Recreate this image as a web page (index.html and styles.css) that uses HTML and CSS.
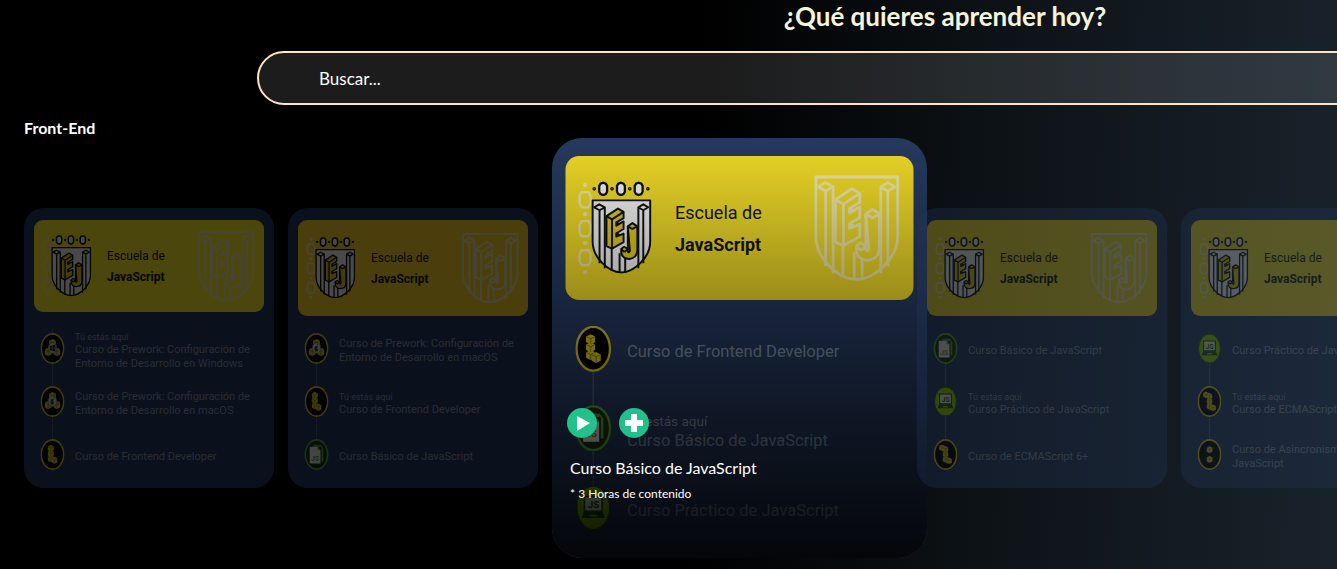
FILE: index.html
```html
<!DOCTYPE html>
<html lang="es">
<head>
<meta charset="utf-8">
<meta name="viewport" content="width=device-width, initial-scale=1">
<title>¿Qué quieres aprender hoy?</title>
<link rel="stylesheet" href="styles.css">
</head>
<body>
<svg class="sprite" aria-hidden="true">
  <symbol id="shield" viewBox="60 84 186 228">
    <path class="shield-base" d="M66 89H241V215C241 262 192 308 153 308S66 262 66 215Z"/>
    <path class="shield-line" d="M71 110l15-9 17 9-16 9zM87 119V280M103 110V295M124 236V303M148 250V308M165 262V308M205 110l15-9 15 9-15 9zM205 110V295M220 119V280"/>
    <path class="shield-block" d="M108 137L143 114 160 124V143L138 156V166L160 153V176L138 189V199L160 190V216L125 236 108 228Z"/>
    <path class="shield-line" d="M108 137L125 147V234M125 147L160 124M138 156L148 161M138 189L148 194"/>
    <path class="shield-block" d="M173 168L187 158 202 168V240C202 276 153 274 153 246V236L162 230 172 236C172 250 179 250 179 240Z"/>
    <path class="shield-line" d="M173 168L187 176 202 168M173 168V240M163 246L153 238M163 246L172 238"/>
  </symbol>
  <symbol id="emblem" viewBox="20 28 228 290">
    <g class="side-hex">
      <path d="M33 64H53L60 76V98L53 110H33L26 98V76ZM33 152H53L60 164V186L53 198H33L26 186V164ZM33 240H53L60 252V274L53 286H33L26 274V252Z"/>
      <circle cx="43" cy="42" r="3"/><circle cx="43" cy="131" r="3"/><circle cx="43" cy="219" r="3"/><circle cx="43" cy="307" r="3"/>
    </g>
    <g class="top-hex">
      <path d="M90 38L98 35 106 38 110 45V63L106 70 98 73 90 70 86 63V45ZM144 38L152 35 160 38 164 45V63L160 70 152 73 144 70 140 63V45ZM198 38L206 35 214 38 218 45V63L214 70 206 73 198 70 194 63V45Z"/>
      <circle cx="71" cy="54" r="2"/><circle cx="125" cy="54" r="2"/><circle cx="179" cy="54" r="2"/><circle cx="234" cy="54" r="2"/>
    </g>
    <use href="#shield" x="60" y="84" width="186" height="228"/>
  </symbol>
  <symbol id="cube" viewBox="0 0 32 38" preserveAspectRatio="none">
    <path fill="#d8c31c" d="M16 1L31 9V28L16 37 1 28V9Z"/>
    <path fill="none" stroke="#4a420a" stroke-width="2" d="M2 10L16 17 30 10M16 17V36"/>
  </symbol>
  <symbol id="ring" viewBox="0 0 110 142">
    <ellipse cx="55" cy="71" rx="51" ry="67" fill="#000" stroke="#dcc41a" stroke-width="7"/>
  </symbol>
  <symbol id="i-frontend" viewBox="0 0 110 142">
    <use href="#ring"/>
    <use href="#cube" x="32" y="74" width="30" height="33"/>
    <use href="#cube" x="32" y="50" width="30" height="33"/>
    <use href="#cube" x="32" y="26" width="30" height="33"/>
    <use href="#cube" x="49" y="80" width="30" height="36"/>
  </symbol>
  <symbol id="i-prework" viewBox="0 0 110 142">
    <use href="#ring"/>
    <use href="#cube" x="38" y="26" width="34" height="42"/>
    <use href="#cube" x="18" y="66" width="34" height="42"/>
    <use href="#cube" x="58" y="66" width="34" height="42"/>
    <ellipse cx="55" cy="69" rx="20" ry="25" fill="#c9c9c9" stroke="#555" stroke-width="3"/>
  </symbol>
  <symbol id="i-windows" viewBox="0 0 110 142">
    <use href="#i-prework"/>
    <path fill="#222" d="M43 59l11-3v12H43zM56 56l12-3v15H56zM43 70h11v12l-11-3zM56 70h12v15l-12-3z"/>
  </symbol>
  <symbol id="i-mac" viewBox="0 0 110 142">
    <use href="#i-prework"/>
    <path fill="#444" d="M58 56c0-5 3-7 5-7 0 4-2 7-5 7zM62 62c-5 4-5 11 1 15-2 8-6 11-9 8-10 2-11-24-1-26 4 2 7-1 9 3z"/>
  </symbol>
  <symbol id="i-ecma" viewBox="0 0 110 142">
    <use href="#ring"/>
    <use href="#cube" x="25" y="24" width="28" height="33"/>
    <use href="#cube" x="41" y="77" width="28" height="33"/>
    <use href="#cube" x="41" y="54" width="28" height="33"/>
    <use href="#cube" x="41" y="31" width="28" height="33"/>
    <use href="#cube" x="57" y="84" width="28" height="33"/>
  </symbol>
  <symbol id="i-async" viewBox="0 0 110 142">
    <use href="#ring"/>
    <use href="#cube" x="41" y="32" width="29" height="34"/>
    <use href="#cube" x="41" y="77" width="29" height="34"/>
  </symbol>
  <symbol id="i-doc" viewBox="0 0 110 142">
    <ellipse cx="55" cy="71" rx="51" ry="67" fill="#1d3012" stroke="#5cae28" stroke-width="7"/>
    <path fill="#5aa02c" d="M42 26H74L86 42V102H78V36H42Z"/>
    <path fill="#e0e0e0" d="M24 35H60L73 52V112H24Z"/>
    <path fill="#5aa02c" d="M60 35V52H73Z"/>
    <text x="31" y="99" class="js-mark" fill="#4a9020">JS</text>
  </symbol>
  <symbol id="i-laptop" viewBox="0 0 110 142">
    <ellipse cx="55" cy="71" rx="50" ry="66" fill="#8cc400" stroke="#1c5a0a" stroke-width="4"/>
    <path fill="#d5e6bc" stroke="#1c4a1c" stroke-width="5" d="M28 37H82V82H28Z"/>
    <path fill="#1c4a1c" d="M26 84H84L91 102H19Z"/>
    <path fill="#8cc400" d="M45 92H65L68 98H42Z"/>
    <text x="38" y="72" class="js-mark" fill="#1c4a1c">JS</text>
  </symbol>
</svg>

<main class="page">
  <section class="search">
    <h1 class="search-title">¿Qué quieres aprender hoy?</h1>
    <input class="search-input" type="text" placeholder="Buscar..." aria-label="Buscar">
  </section>

  <section class="category">
    <h2 class="category-title">Front-End</h2>
    <div class="carousel">

      <article class="card dimmed">
        <header class="banner lime">
          <svg class="emblem"><use href="#emblem"/></svg>
          <p class="school">Escuela de <b>JavaScript</b></p>
          <svg class="watermark"><use href="#shield"/></svg>
        </header>
        <ul class="steps continued">
          <li><svg class="icon"><use href="#i-windows"/></svg><p><small>Tú estás aquí</small>Curso de Prework: Configuración de Entorno de Desarrollo en Windows</p></li>
          <li><svg class="icon"><use href="#i-mac"/></svg><p>Curso de Prework: Configuración de Entorno de Desarrollo en macOS</p></li>
          <li><svg class="icon"><use href="#i-frontend"/></svg><p>Curso de Frontend Developer</p></li>
        </ul>
      </article>

      <article class="card dimmed">
        <header class="banner amber">
          <svg class="emblem"><use href="#emblem"/></svg>
          <p class="school">Escuela de <b>JavaScript</b></p>
          <svg class="watermark"><use href="#shield"/></svg>
        </header>
        <ul class="steps">
          <li><svg class="icon"><use href="#i-mac"/></svg><p>Curso de Prework: Configuración de Entorno de Desarrollo en macOS</p></li>
          <li><svg class="icon"><use href="#i-frontend"/></svg><p><small>Tú estás aquí</small>Curso de Frontend Developer</p></li>
          <li><svg class="icon"><use href="#i-doc"/></svg><p>Curso Básico de JavaScript</p></li>
        </ul>
      </article>

      <div class="featured">
        <article class="card enlarged">
          <header class="banner">
            <svg class="emblem"><use href="#emblem"/></svg>
            <p class="school">Escuela de <b>JavaScript</b></p>
            <svg class="watermark"><use href="#shield"/></svg>
          </header>
          <ul class="steps">
            <li><svg class="icon"><use href="#i-frontend"/></svg><p>Curso de Frontend Developer</p></li>
            <li><svg class="icon"><use href="#i-doc"/></svg><p><small>Tú estás aquí</small>Curso Básico de JavaScript</p></li>
            <li><svg class="icon"><use href="#i-laptop"/></svg><p>Curso Práctico de JavaScript</p></li>
          </ul>
        </article>
        <div class="details">
          <div class="actions">
            <button class="action" type="button" aria-label="Reproducir"><svg viewBox="0 0 30 30"><path d="M10 8V23L23 15Z"/></svg></button>
            <button class="action" type="button" aria-label="Agregar"><svg viewBox="0 0 30 30"><path d="M12 6h6v6h6v6h-6v6h-6v-6H6v-6h6z"/></svg></button>
          </div>
          <p class="details-title">Curso Básico de JavaScript</p>
          <p class="details-time">* 3 Horas de contenido</p>
        </div>
      </div>

      <article class="card dimmed">
        <header class="banner">
          <svg class="emblem"><use href="#emblem"/></svg>
          <p class="school">Escuela de <b>JavaScript</b></p>
          <svg class="watermark"><use href="#shield"/></svg>
        </header>
        <ul class="steps">
          <li><svg class="icon"><use href="#i-doc"/></svg><p>Curso Básico de JavaScript</p></li>
          <li><svg class="icon"><use href="#i-laptop"/></svg><p><small>Tú estás aquí</small>Curso Práctico de JavaScript</p></li>
          <li><svg class="icon"><use href="#i-ecma"/></svg><p>Curso de ECMAScript 6+</p></li>
        </ul>
      </article>

      <article class="card dimmed">
        <header class="banner">
          <svg class="emblem"><use href="#emblem"/></svg>
          <p class="school">Escuela de <b>JavaScript</b></p>
          <svg class="watermark"><use href="#shield"/></svg>
        </header>
        <ul class="steps">
          <li><svg class="icon"><use href="#i-laptop"/></svg><p>Curso Práctico de JavaScript</p></li>
          <li><svg class="icon"><use href="#i-ecma"/></svg><p><small>Tú estás aquí</small>Curso de ECMAScript 6+</p></li>
          <li><svg class="icon"><use href="#i-async"/></svg><p>Curso de Asincronismo con JavaScript</p></li>
        </ul>
      </article>

    </div>
  </section>
</main>
</body>
</html>
```

FILE: styles.css
```css
* {
  box-sizing: border-box;
}

html {
  background: #000;
}

body {
  margin: 0;
  min-height: 100vh;
  overflow: hidden;
  color: #fff;
  font-family: Lato, "Open Sans", sans-serif;
  background: linear-gradient(92deg, #000 52%, #0c1115 72%, #19222b 100%);
}

h1, h2, p, ul {
  margin: 0;
  padding: 0;
}

.sprite {
  display: block;
  width: 0;
  height: 0;
}

.page {
  overflow: hidden;
}

/* The search area runs past the right edge of the viewport. */
.search {
  display: flex;
  flex-direction: column;
  gap: 18px;
  width: calc(100% + 553px);
  padding: 0 257px;
}

.search-title {
  color: #f5f5dc;
  font-size: 26px;
  line-height: 33px;
  text-align: center;
}

.search-input {
  width: 100%;
  height: 54px;
  padding: 0 60px;
  border: 2px solid #ffe4c4;
  border-radius: 27px;
  background: rgba(255, 255, 255, 0.11);
  color: #fff;
  font: 17px Lato, "Open Sans", sans-serif;
}

.search-input::placeholder {
  color: #fff;
  opacity: 1;
}

.category {
  padding-left: 24px;
}

.category-title {
  padding-top: 13px;
  font-size: 16px;
  line-height: 20px;
}

.carousel {
  display: flex;
  align-items: center;
  gap: 14px;
  overflow: hidden;
}

.card {
  display: flex;
  flex: 0 0 250px;
  flex-direction: column;
  justify-content: space-between;
  width: 250px;
  height: 280px;
  padding: 12px 10px 7px;
  border-radius: 20px;
  background: #25395e;
  font-family: Roboto, sans-serif;
}

.dimmed {
  opacity: 0.3;
}

.banner {
  display: flex;
  align-items: center;
  height: 96px;
  padding: 0 9px 0 8px;
  border-radius: 9px;
  background: #ecd727;
}

.lime {
  height: 92px;
  background: #f8ea28;
}

.amber {
  background: #f3d128;
}

.emblem {
  flex: none;
  width: 50px;
  height: 64px;
  color: #111;
  --shield-base: #f0f0f0;
  --shield-block: #dcc81c;
}

.school {
  flex: 1;
  padding-top: 2px;
  padding-left: 15px;
  color: #14140a;
  font-size: 12px;
  line-height: 21px;
}

.school b {
  display: block;
}

.watermark {
  flex: none;
  width: 58px;
  height: 72px;
  color: #ece4a4;
  --shield-base: none;
  --shield-block: none;
}

.shield-base,
.shield-block,
.shield-line {
  stroke: currentColor;
  stroke-width: 6;
  stroke-linejoin: round;
}

.shield-base {
  fill: var(--shield-base);
}

.shield-block {
  fill: var(--shield-block);
}

.shield-line {
  fill: none;
}

.side-hex {
  fill: none;
  stroke: #ece4a4;
  stroke-width: 7;
}

.top-hex {
  fill: #f0f0f0;
  stroke: #111;
  stroke-width: 7;
}

.js-mark {
  font: bold 30px Roboto, sans-serif;
}

.steps {
  padding: 0 0 0 6px;
  list-style: none;
  background: linear-gradient(#4a5a74, #4a5a74) no-repeat 18px 26px / 1px 106px;
}

.continued {
  background-position: 18px 6px;
  background-size: 1px 126px;
}

.steps li {
  display: flex;
  align-items: center;
  gap: 10px;
  height: 53px;
  color: #8492a8;
  font-size: 11px;
  line-height: 14px;
}

.steps p {
  flex: 1;
  padding-top: 4px;
}

.steps small {
  display: block;
  font-size: 9px;
  line-height: 12px;
}

.icon {
  flex: none;
  width: 25px;
  height: 31px;
}

/* Keeps room for the card at one and a half times its size. */
.featured {
  display: grid;
  flex: 0 0 375px;
  height: 420px;
  margin-right: -24px;
}

.featured > * {
  grid-area: 1 / 1;
}

.enlarged {
  padding: 12px 9px 7px;
  transform: scale(1.5);
  transform-origin: 0 0;
}

.details {
  z-index: 1;
  display: flex;
  flex-direction: column;
  justify-content: flex-end;
  padding: 0 18px 54px;
  border-radius: 30px;
  background: linear-gradient(rgba(0, 0, 0, 0), rgba(0, 0, 0, 0.9));
}

/* The enlarged card and its details stay below the neighbouring cards. */
.featured {
  isolation: isolate;
}

.actions {
  display: flex;
  gap: 22px;
  margin: 0 0 18px -3px;
}

.action {
  width: 30px;
  height: 30px;
  padding: 0;
  border: 0;
  border-radius: 50%;
  background: #22c08b;
}

.action svg {
  display: block;
  fill: #fff;
}

.details-title {
  font-size: 16px;
  line-height: 24px;
}

.details-time {
  padding-top: 4px;
  font-size: 12px;
  line-height: 20px;
}
```
